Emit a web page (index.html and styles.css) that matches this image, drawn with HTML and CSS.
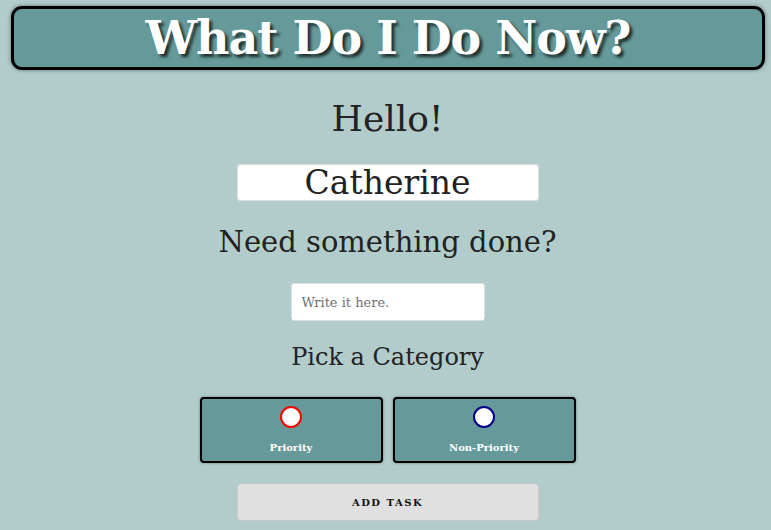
FILE: index.html
```html
<!DOCTYPE html>
<html>
<head>
<meta charset="utf-8">
<link rel="stylesheet" href="styles.css">
</head>
<body>
<header class="banner"><h1 class="title">What Do I Do Now?</h1></header>
<main class="main">
  <h2 class="hello">Hello!</h2>
  <input class="name" type="text" value="Catherine">
  <h3 class="need">Need something done?</h3>
  <input class="task" type="text" placeholder="Write it here.">
  <h4 class="pick">Pick a Category</h4>
  <div class="cats">
    <label class="cat"><span class="dot dot-red"></span><span class="cat-label">Priority</span></label>
    <label class="cat"><span class="dot dot-blue"></span><span class="cat-label">Non-Priority</span></label>
  </div>
  <button class="add">ADD TASK</button>
</main>
</body>
</html>
```
FILE: styles.css
```css
html, body { margin: 0; padding: 0; }
body {
  background: #b2cccc;
  font-family: "DejaVu Serif", Georgia, serif;
  color: #222;
  width: 771px;
  height: 530px;
  overflow: hidden;
}
.banner {
  margin: 6px 6px 0 11px;
  height: 58px;
  background: #669999;
  border: 3px solid #000;
  border-radius: 11px;
  box-shadow: 0 0 4px rgba(0,0,0,0.45);
  display: flex;
  align-items: center;
  justify-content: center;
}
.title {
  margin: 0;
  font-size: 46px;
  font-weight: bold;
  color: #fff;
  text-shadow: 3px 3px 3px rgba(0,0,0,0.7);
  letter-spacing: -1px;
}
.main {
  display: flex;
  flex-direction: column;
  align-items: center;
  padding-left: 4px;
}
.hello { margin: 27px 0 0; font-size: 36px; font-weight: normal; line-height: 44px; }
.name {
  margin-top: 23px;
  width: 302px; height: 37px; box-sizing: border-box;
  border: 1px solid #ddd; border-radius: 3px;
  font-family: inherit; font-size: 33px; text-align: center; color: #222;
  padding: 0;
}
.need { margin: 21px 0 0; font-size: 29px; font-weight: normal; line-height: 40px; }
.task {
  margin-top: 21px;
  width: 194px; height: 38px; box-sizing: border-box;
  border: 1px solid #ddd; border-radius: 3px;
  font-family: inherit; font-size: 13px; padding: 0 10px;
}
.task::placeholder { color: #707070; }
.pick { margin: 18px 0 0; font-size: 24px; font-weight: normal; line-height: 36px; }
.cats { display: flex; gap: 10px; margin-top: 22px; }
.cat {
  width: 183px; height: 66px; box-sizing: border-box;
  background: #669999; border: 2px solid #000; border-radius: 4px;
  box-shadow: 0 0 3px rgba(0,0,0,0.4);
  display: flex; flex-direction: column; align-items: center;
  padding-top: 7px;
}
.dot {
  width: 22px; height: 22px; box-sizing: border-box; border-radius: 50%;
  background: #fff; border: 2px solid red;
}
.dot-blue { border-color: #00008b; }
.cat-label { margin-top: 14px; color: #fff; font-weight: bold; font-size: 10px; }
.add {
  margin-top: 20px;
  width: 302px; height: 38px;
  background: #e0e0e0; border: 1px solid #c8c8c8; border-radius: 4px;
  font-family: inherit; font-weight: bold; font-size: 10px; letter-spacing: 1.5px; color: #111;
}
```
